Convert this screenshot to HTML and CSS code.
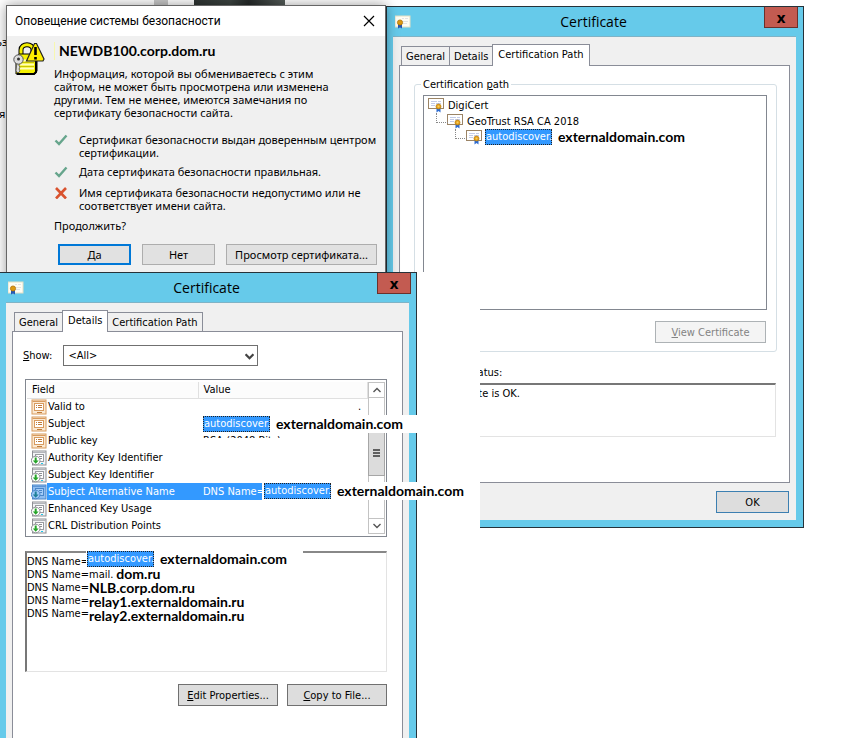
FILE: index.html
```html
<!DOCTYPE html>
<html lang="ru">
<head>
<meta charset="utf-8">
<title>Certificate</title>
<link rel="stylesheet" href="styles.css">
</head>
<body>
<svg class="defs" aria-hidden="true">
  <symbol id="cert" viewBox="0 0 16 16">
    <rect x=".5" y="1.500" width="15" height="10" fill="#fff" stroke="#9b8466"/>
    <path d="M3 4.500h6M10 4.500h3M3 6.500h4M8 6.500h5M3 8.500h4" stroke="#c3cce8" fill="none"/>
    <path d="M8.500 11v4.500l2-1.500 2 1.500V11z" fill="#2c6bd1"/>
    <circle cx="10.500" cy="9.500" r="2.500" fill="#e5a31b" stroke="#b8770c" stroke-width=".7"/>
    <circle cx="10.500" cy="9.500" r="1" fill="#f6cf63"/>
  </symbol>
  <symbol id="certlogo" viewBox="0 0 16 16">
    <rect x="0" y="2" width="15" height="11" fill="#fffdf3" stroke="#e4dfc4"/>
    <path d="M7 4.500h2M10 4.500h3M7 7.500h6M7 9.500h5" stroke="#e3e3e3"/>
    <path d="M3 10v4.500l2-1 2 1V10z" fill="#2459b5"/>
    <circle cx="5" cy="8.500" r="2.600" fill="#dc9a12" stroke="#a96a05" stroke-width=".7"/>
  </symbol>
  <symbol id="field" viewBox="0 0 16 16">
    <rect x="1" y="1" width="14" height="14" fill="#fbe9d2" stroke="#d89b5f"/>
    <path d="M1.500 2.500h13" stroke="#d89b5f"/>
    <rect x="3.500" y="4.500" width="9" height="7" fill="#fff" stroke="#d89b5f"/>
    <path d="M5 6.500h1M7 6.500h4M5 8.500h1M7 8.500h4M6 13.500h5" stroke="#c07c3a"/>
  </symbol>
  <symbol id="ext" viewBox="0 0 16 16">
    <rect x="1.500" y="1" width="13.500" height="14" fill="#f2f3f5" stroke="#8d8f94"/>
    <path d="M2 2.500h13" stroke="#b3b5ba"/>
    <rect x="4.500" y="4.500" width="8" height="7" fill="#fff" stroke="#9a9ca1"/>
    <path d="M8 6.500h3M9 8.500h2" stroke="#8d8f94"/>
    <path d="M10 13.500h2" stroke="#22c7e8"/>
    <circle cx="4.700" cy="10.500" r="4.300" fill="#fff" stroke="#8d8f94"/>
    <path d="M3.700 7.500h2v3h2l-3 3.200-3-3.200h2z" fill="#27a52a"/>
  </symbol>
  <symbol id="extsel" viewBox="0 0 16 16">
    <rect x="1.500" y="1" width="13.500" height="14" fill="#8fbdf0" stroke="#4a86c8"/>
    <path d="M2 2.500h13" stroke="#5d96d6"/>
    <rect x="4.500" y="4.500" width="8" height="7" fill="#a5cdf8" stroke="#4a86c8"/>
    <path d="M8 6.500h3M9 8.500h2" stroke="#4a86c8"/>
    <circle cx="4.700" cy="10.500" r="4.300" fill="#9cc8f7" stroke="#4a86c8"/>
    <path d="M3.700 7.500h2v3h2l-3 3.200-3-3.200h2z" fill="#1f7f98"/>
  </symbol>
  <symbol id="tick" viewBox="0 0 14 12"><path d="M1.500 6.500l3.500 3.500 7.500-8.500" fill="none" stroke="#66a58c" stroke-width="2.400"/></symbol>
  <symbol id="cross" viewBox="0 0 14 12"><path d="M2 1l10 10.500M12 1L2 11.500" fill="none" stroke="#d9532f" stroke-width="2.600"/></symbol>
</svg>

<div class="backdrop" aria-hidden="true">
  <div class="strip"><span class="gutter"></span><span class="photo"></span></div>
  <span class="frag frag-a">ьз</span>
  <span class="frag frag-b">я</span>
</div>

<section class="window path-window">
  <header class="titlebar">
    <svg class="icon"><use href="#certlogo"/></svg>
    <h2>Certificate</h2>
    <button class="close" aria-label="Close">x</button>
  </header>
  <div class="client">
    <nav class="tabs"><button>General</button><button>Details</button><button class="on">Certification Path</button></nav>
    <div class="panel">
      <fieldset>
        <legend>Certification <u>p</u>ath</legend>
        <div class="tree">
          <div class="node"><svg class="icon"><use href="#cert"/></svg>DigiCert</div>
          <div class="node level1"><svg class="icon"><use href="#cert"/></svg>GeoTrust RSA CA 2018</div>
          <div class="node level2"><svg class="icon"><use href="#cert"/></svg><span class="chip">autodiscover.</span><b>externaldomain.com</b></div>
        </div>
        <button class="btn disabled" disabled><u>V</u>iew Certificate</button>
      </fieldset>
      <label class="status" for="status">Certificate status:</label>
      <textarea id="status" readonly>This certificate is OK.</textarea>
    </div>
    <button class="btn ok">OK</button>
  </div>
</section>
<div class="blank"></div>

<section class="window alert-window">
  <header><h2>Оповещение системы безопасности</h2>
    <button class="plain-close" aria-label="Закрыть"><svg viewBox="0 0 12 12"><path d="M1 1l10 10M11 1L1 11" stroke="#000" stroke-width="1.200"/></svg></button>
  </header>
  <div class="alert-body">
    <svg class="lock" viewBox="0 0 32 34">
      <path d="M8 14V8c0-7 12-7 12 0v6" fill="none" stroke="#000" stroke-width="5"/>
      <path d="M8 14V8c0-7 12-7 12 0v6" fill="none" stroke="#f4f000" stroke-width="3"/>
      <path d="M4 14l2-2h18v17l-2 3H3V14z" fill="#f4f000" stroke="#000"/>
      <path d="M23 14v16l-2 2H4" fill="none" stroke="#000" stroke-width="2"/>
      <path d="M7 18.500h14M7 22.500h14M7 26.500h14" stroke="#fffec0" stroke-width="2"/>
      <path d="M7 20.500h14M7 24.500h14" stroke="#c9c500"/>
      <path d="M13.500 19L21.500 1.500h2L31 17l-1 2z" fill="#ffee00" stroke="#222" stroke-width="1.200"/>
      <path d="M22.500 5v8M22.500 15v2.500" stroke="#000" stroke-width="2.600"/>
      <path d="M4 20l-1 9 2 2 2-2-1-2 1-2-1-1V20z" fill="#ddd" stroke="#555" stroke-width=".8"/>
      <circle cx="5.500" cy="17.500" r="4.700" fill="#ddd" stroke="#555"/><circle cx="5.500" cy="17" r="1.500" fill="#333"/>
    </svg>
    <div class="message">
      <h3>NEWDB100.corp.dom.ru</h3>
      <p>Информация, которой вы обмениваетесь с этим<br>сайтом, не может быть просмотрена или изменена<br>другими. Тем не менее, имеются замечания по<br>сертификату безопасности сайта.</p>
      <ul>
        <li><svg><use href="#tick"/></svg><span>Сертификат безопасности выдан доверенным центром<br>сертификации.</span></li>
        <li><svg><use href="#tick"/></svg><span>Дата сертификата безопасности правильная.</span></li>
        <li><svg><use href="#cross"/></svg><span>Имя сертификата безопасности недопустимо или не<br>соответствует имени сайта.</span></li>
      </ul>
      <p class="ask">Продолжить?</p>
      <div class="choices"><button class="primary">Да</button><button>Нет</button><button class="wide">Просмотр сертификата...</button></div>
    </div>
  </div>
</section>

<section class="window details-window">
  <header class="titlebar">
    <svg class="icon"><use href="#certlogo"/></svg>
    <h2>Certificate</h2>
    <button class="close" aria-label="Close">x</button>
  </header>
  <div class="client">
    <nav class="tabs"><button>General</button><button class="on">Details</button><button>Certification Path</button></nav>
    <div class="panel">
      <div class="show"><label for="show"><u>S</u>how:</label>
        <span class="combo"><select id="show"><option>&lt;All&gt;</option></select><svg viewBox="0 0 8 6"><path d="M.5 1L4 4.500 7.500 1" fill="none" stroke="#444" stroke-width="2"/></svg></span>
      </div>
      <div class="list">
        <table>
          <thead><tr><th class="name">Field</th><th>Value</th></tr></thead>
          <tbody>
            <tr><td><svg class="icon"><use href="#field"/></svg><span>Valid to</span></td><td class="dot">.</td></tr>
            <tr><td><svg class="icon"><use href="#field"/></svg><span>Subject</span></td><td><div class="mark"><span class="chip">autodiscover.</span><b class="patch">externaldomain.com</b></div></td></tr>
            <tr><td><svg class="icon"><use href="#field"/></svg><span>Public key</span></td><td><div class="hidden-line">RSA (2048 Bits)</div></td></tr>
            <tr><td><svg class="icon"><use href="#ext"/></svg><span>Authority Key Identifier</span></td><td></td></tr>
            <tr><td><svg class="icon"><use href="#ext"/></svg><span>Subject Key Identifier</span></td><td></td></tr>
            <tr class="selected"><td><svg class="icon"><use href="#extsel"/></svg><span>Subject Alternative Name</span></td><td><div class="mark"><span class="dns">DNS Name=</span><span class="chip">autodiscover.</span><b class="patch">externaldomain.com</b></div></td></tr>
            <tr><td><svg class="icon"><use href="#ext"/></svg><span>Enhanced Key Usage</span></td><td></td></tr>
            <tr><td><svg class="icon"><use href="#ext"/></svg><span>CRL Distribution Points</span></td><td></td></tr>
          </tbody>
        </table>
        <div class="scroll">
          <button aria-label="Up"><svg viewBox="0 0 8 6"><path d="M.5 5L4 1.500 7.500 5" fill="none" stroke="#555" stroke-width="1.400"/></svg></button>
          <span class="thumb"><i></i><i></i><i></i></span>
          <button aria-label="Down"><svg viewBox="0 0 8 6"><path d="M.5 1L4 4.500 7.500 1" fill="none" stroke="#555" stroke-width="1.400"/></svg></button>
        </div>
      </div>
      <div class="names">
        <div class="keys"><div>DNS Name=</div><div>DNS Name=</div><div>DNS Name=</div><div>DNS Name=</div><div>DNS Name=</div></div>
        <div class="hosts">
          <div class="first"><span class="chip">autodiscover.</span><b>externaldomain.com</b></div>
          <div>mail. <b>dom.ru</b></div>
          <div><b>NLB.corp.dom.ru</b></div>
          <div><b>relay1.externaldomain.ru</b></div>
          <div><b>relay2.externaldomain.ru</b></div>
        </div>
      </div>
      <div class="actions"><button class="btn"><u>E</u>dit Properties...</button><button class="btn"><u>C</u>opy to File...</button></div>
    </div>
  </div>
</section>
</body>
</html>
```
FILE: styles.css
```css
* { box-sizing: border-box; }
html, body { height: 100%; }
body {
  margin: 0;
  position: relative;
  overflow: hidden;
  background: #fff;
  color: #000;
  font: 11px/13px "DejaVu Sans Condensed", "DejaVu Sans", sans-serif;
}
h2, h3, p, ul { margin: 0; padding: 0; font-weight: normal; }
ul { list-style: none; }
button, select, textarea { font: inherit; color: inherit; margin: 0; padding: 0; border-radius: 0; }
b { font: bold 14px/14px Lato, sans-serif; white-space: nowrap; }
svg { display: block; flex: none; }
.defs { position: absolute; width: 0; height: 0; }
.icon { width: 16px; height: 16px; }

/* Page behind the windows */
.backdrop { font: 11px/13px "Noto Sans", sans-serif; }
.strip { display: flex; padding-left: 154px; gap: 26px; }
.gutter { width: 14px; height: 5px; background: #c8c8c8; }
.photo { width: 91px; height: 5px; background: linear-gradient(90deg, #2e3432, #3c4441 40%, #252a29 60%, #555d59); }
.frag { position: absolute; left: 0; }
.frag-a { top: 35px; left: -4px; }
.frag-b { top: 107px; left: -1px; }

/* Windows on the desktop */
.window { position: absolute; display: flex; flex-direction: column; }
.path-window, .details-window { background: #66caea; border: 1px solid #263239; }
.path-window { left: 386px; top: 6px; width: 418px; height: 522px; padding: 0 7px 7px 6px; }
.details-window { left: -1px; top: 272px; width: 418px; height: 480px; padding: 0 7px 7px 6px; }
.alert-window { left: 6px; top: 5px; width: 380px; height: 290px; background: #f0f0f0; border: 1px solid #666; box-shadow: 0 0 12px rgba(0,0,0,.4); font-family: "Noto Sans", sans-serif; }
.blank { position: absolute; left: 417px; top: 272px; width: 63px; height: 256px; background: #fff; }

.titlebar { display: flex; height: 29px; flex: none; justify-content: space-between; }
.titlebar .icon { margin: 7px 0 0 2px; }
.titlebar h2 { flex: 1; text-align: center; font: 14px/30px "Open Sans", sans-serif; padding-left: 12px; }
.close { width: 34px; height: 21px; background: #c35b51; border: 1px solid #6b302b; border-top: 0; font: bold 15px/18px "Open Sans", sans-serif; margin-right: -2px; }
.client { flex: 1; min-height: 0; display: flex; flex-direction: column; background: #f0f0f0; border-top: 1px solid #7fb3c6; padding: 7px 6px 0; }

.tabs { display: flex; align-items: flex-end; height: 22px; padding-left: 2px; z-index: 1; margin-bottom: -1px; flex: none; }
.tabs button { height: 19px; margin: 0 -1px 1px 0; padding: 0 4px; border: 1px solid #8a8d98; border-bottom: 0; background: #f0f0f0; white-space: nowrap; }
.tabs .on { height: 22px; margin-bottom: 0; padding: 0 5px 2px; background: #fff; }
.panel { border: 1px solid #8a8d98; background: #fff; flex: 1; min-height: 0; }

.btn { height: 22px; min-width: 100px; border: 1px solid #707070; background: #ddd; }

/* Certification path */
.path-window .panel { padding: 12px 12px 0 14px; display: flex; flex-direction: column; }
fieldset { margin: 0; padding: 4px 9px 7px 8px; border: 1px solid #d5dfe5; border-radius: 3px; height: 274px; display: flex; flex-direction: column; }
legend { padding: 0 2px; margin-left: -2px; }
.tree { height: 215px; border: 1px solid #828790; padding: 1px 4px; }
.node { display: flex; align-items: center; gap: 4px; height: 16px; position: relative; white-space: nowrap; }
.level1 { padding-left: 19px; }
.level2 { padding-left: 38px; gap: 3px; }
.level1::before, .level2::before { content: ""; position: absolute; top: 0; width: 11px; height: 9px; border: 1px dotted #888; border-width: 0 0 1px 1px; }
.level1::before { left: 8px; }
.level2::before { left: 27px; }
.chip { display: inline-block; flex: none; background: #3399ff; color: #fff; outline: 1px dotted #222; outline-offset: -1px; height: 16px; width: 67px; line-height: 15px; padding-left: 1px; white-space: nowrap; }
.chip + b { margin-left: 3px; }
.btn.disabled { align-self: flex-end; width: 111px; margin: 11px 1px 0; border-color: #adb2b5; background: #f4f4f4; color: #838383; flex: none; }
.status { margin: 14px 0 4px; }
textarea { height: 54px; resize: none; border: 1px solid #e3e3e3; border-top: 2px solid #777; padding: 2px 0 0; margin-right: 1px; overflow: hidden; }
.ok { align-self: flex-end; width: 73px; min-width: 0; margin: 8px 1px 7px; border-color: #3c7fb1; flex: none; }

/* Security alert */
.alert-window header { display: flex; justify-content: space-between; align-items: center; background: #fff; height: 30px; padding: 0 10px 0 8px; flex: none; }
.alert-window h2 { font: 12px/16px Roboto, sans-serif; }
.plain-close { border: 0; background: none; width: 12px; height: 12px; }
.alert-body { display: flex; padding: 6px 7px 0 6px; gap: 9px; }
.lock { width: 32px; height: 34px; }
.message { flex: 1; white-space: nowrap; }
h3 { font: bold 14px/18px Lato, sans-serif; padding-left: 4px; margin-bottom: 7px; border-left: 1px solid #f7f7b0; }
ul { padding: 14px 0 7px; display: grid; gap: 8px; }
li { display: flex; gap: 11px; }
li:nth-child(2) { margin-top: -2px; }
li svg { width: 14px; height: 12px; margin-top: 1px; }
.choices { display: flex; gap: 11px; padding: 12px 0 0 4px; }
.choices button { width: 73px; height: 21px; border: 1px solid #adadad; background: #e1e1e1; }
.choices .primary { border: 2px solid #0078d7; }
.choices .wide { width: 151px; }

/* Certificate details */
.details-window .panel { padding: 13px 15px 0 12px; }
.show { display: flex; align-items: center; height: 21px; margin-left: -2px; }
.combo { position: relative; margin-left: 11px; }
select { display: block; width: 195px; height: 21px; border: 1px solid #707070; background: #fff; appearance: none; padding-left: 4px; }
.combo svg { position: absolute; right: 4px; top: 8px; width: 9px; height: 7px; pointer-events: none; }
.list { display: flex; justify-content: space-between; margin-top: 13px; height: 158px; border: 1px solid #828790; padding: 2px 1px; }
table { flex: 1; border-collapse: collapse; table-layout: fixed; height: 152px; }
th { height: 16px; padding: 0 5px; text-align: left; font-weight: normal; border: 1px solid #e0e0e0; border-width: 0 1px 1px 0; background: #fcfcfc; }
th.name { width: 171px; }
td { height: 17px; padding: 0; white-space: nowrap; }
td:first-child { padding-left: 4px; }
td .icon, td .icon + span { display: inline-block; vertical-align: middle; }
td .icon + span { padding-left: 1px; }
td:nth-child(2) { padding-left: 5px; }
td.dot { padding-left: 160px; }
.selected td { color: #fff; }
.selected td:first-child { background: linear-gradient(#3399ff, #3399ff) 20px 0 no-repeat; }
.mark { position: relative; display: flex; gap: 2px; }
.dns { background: #3399ff; margin-left: -5px; padding-left: 5px; line-height: 17px; width: 64px; }
.patch { position: absolute; left: 68px; top: -1px; width: 146px; line-height: 18px; background: #fff; color: #000; padding-left: 2px; }
.selected .patch { left: 129px; width: 145px; }
.hidden-line { height: 4px; overflow: hidden; margin-bottom: 9px; }
.scroll { width: 17px; display: flex; flex-direction: column; border: 1px solid #c3c3c3; justify-content: space-between; }
.scroll button { height: 16px; border: 1px solid #c3c3c3; background: #fff; display: grid; place-items: center; margin: -1px; }
.scroll button svg { width: 8px; height: 6px; }
.thumb { height: 46px; margin: 0 -1px 10px; border: 1px solid #a6a6a6; background: #dcdcdc; display: flex; flex-direction: column; justify-content: center; align-items: center; gap: 1px; }
.thumb i { width: 7px; height: 2px; background: #606060; }
.names { display: flex; margin-top: 14px; height: 121px; border: 1px solid #e3e3e3; border-top: 2px solid #888; border-left: 2px solid #777; }
.keys { padding-top: 2px; width: 62px; white-space: nowrap; }
.hosts div { height: 14px; display: flex; align-items: center; gap: 3px; }
.hosts .first { background: #fff; margin: -2px 0 0 -3px; height: 16px; width: 217px; padding-left: 1px; }
.actions { display: flex; justify-content: flex-end; gap: 9px; margin-top: 12px; }
```
